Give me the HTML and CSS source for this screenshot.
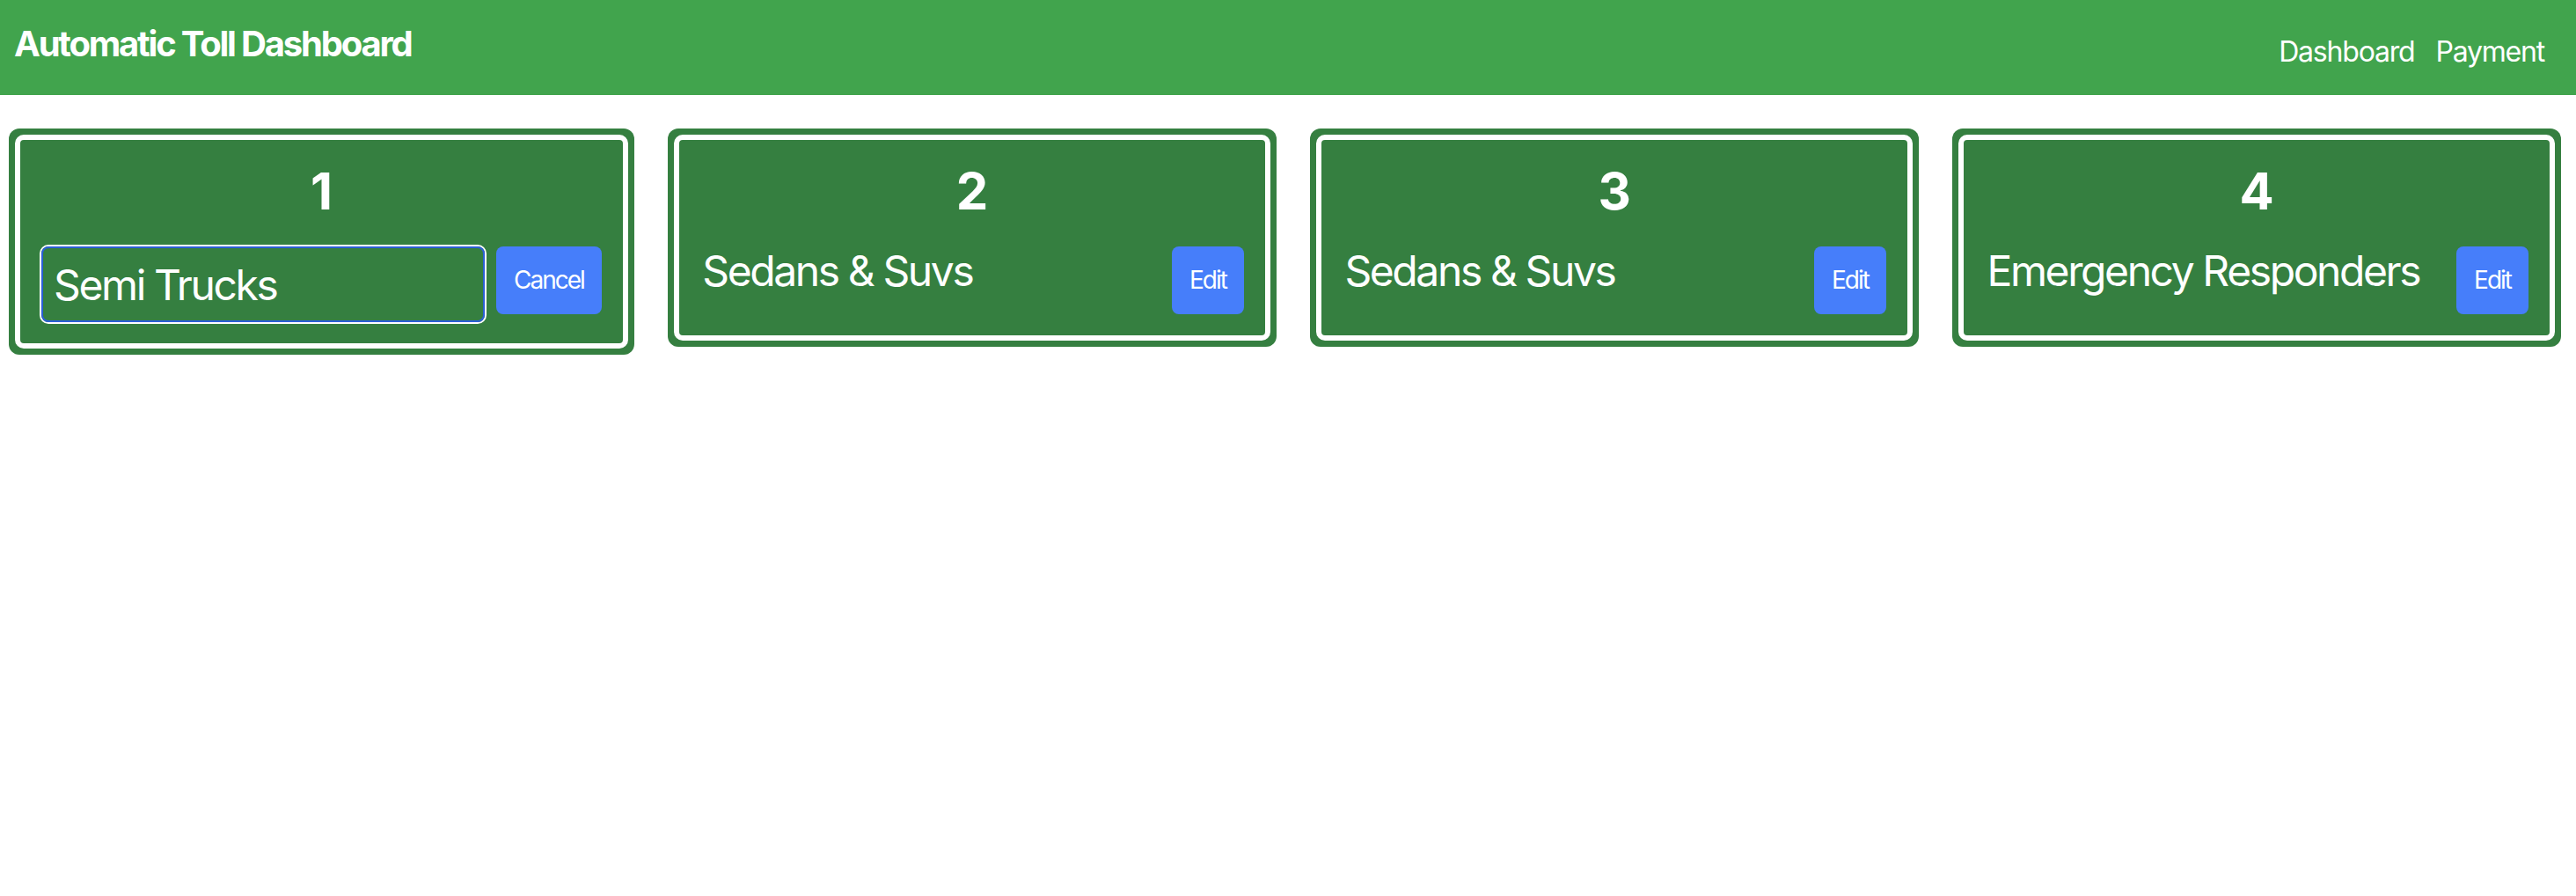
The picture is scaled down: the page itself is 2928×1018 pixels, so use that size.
FILE: index.html
```html
<!DOCTYPE html>
<html lang="en">
<head>
<meta charset="utf-8">
<title>Automatic Toll Dashboard</title>
<link rel="stylesheet" href="styles.css">
</head>
<body>
<header class="topbar">
  <h1 class="brand">Automatic Toll Dashboard</h1>
  <nav class="nav">
    <a class="nav-link nav-link-first" href="#">Dashboard</a>
    <a class="nav-link" href="#">Payment</a>
  </nav>
</header>
<main class="lanes">
  <section class="lane lane-editing">
    <div class="lane-inner">
      <div class="lane-num">1</div>
      <div class="lane-row">
        <input class="lane-input" type="text" value="Semi Trucks">
        <button class="btn" type="button">Cancel</button>
      </div>
    </div>
  </section>
  <section class="lane">
    <div class="lane-inner">
      <div class="lane-num">2</div>
      <div class="lane-row">
        <span class="lane-name">Sedans &amp; Suvs</span>
        <button class="btn" type="button">Edit</button>
      </div>
    </div>
  </section>
  <section class="lane">
    <div class="lane-inner">
      <div class="lane-num">3</div>
      <div class="lane-row">
        <span class="lane-name">Sedans &amp; Suvs</span>
        <button class="btn" type="button">Edit</button>
      </div>
    </div>
  </section>
  <section class="lane">
    <div class="lane-inner">
      <div class="lane-num">4</div>
      <div class="lane-row">
        <span class="lane-name">Emergency Responders</span>
        <button class="btn" type="button">Edit</button>
      </div>
    </div>
  </section>
</main>
</body>
</html>
```
FILE: styles.css
```css
* { box-sizing: border-box; }

html, body {
  margin: 0;
  padding: 0;
  background: #ffffff;
  font-family: Inter, "Liberation Sans", Arial, sans-serif;
}

.topbar {
  height: 108px;
  background: #41a44d;
  color: #ffffff;
  display: flex;
  justify-content: space-between;
  align-items: flex-start;
  padding: 22px 16px 0 16px;
}

.brand {
  margin: 0;
  font-size: 40px;
  line-height: 56px;
  font-weight: 700;
  letter-spacing: -2.2px;
}

.nav {
  display: flex;
  margin-top: 13px;
  margin-right: 20px;
}

.nav-link {
  color: #ffffff;
  text-decoration: none;
  font-size: 32px;
  line-height: 48px;
  letter-spacing: -1.2px;
}

.nav-link-first { margin-right: 24px; }

.lanes {
  display: flex;
  align-items: flex-start;
  gap: 38.5px;
  padding: 38px 17px 0 10px;
}

.lane {
  flex: 1 1 0;
  min-width: 0;
  background: #357f40;
  padding: 7px;
  border-radius: 12px;
}

.lane-editing { flex: none; }

.lane-inner {
  border: 6px solid #ffffff;
  border-radius: 10px;
  padding: 22px 24px 24px 24px;
}

.lane-num {
  text-align: center;
  color: #ffffff;
  font-size: 58px;
  line-height: 72px;
  font-weight: 700;
  margin-bottom: 27px;
}

.lane-row {
  display: flex;
  justify-content: space-between;
  align-items: flex-start;
  gap: 13px;
}

.lane-name {
  color: #ffffff;
  font-size: 48px;
  line-height: 55px;
  letter-spacing: -2.4px;
  white-space: nowrap;
  padding-left: 2px;
}

.lane-input {
  width: 504px;
  height: 86px;
  margin: 0;
  padding: 0 10px 0 12px;
  border: 2px solid #2b5fd6;
  border-radius: 8px;
  box-shadow: 0 0 0 2px #ffffff;
  background: transparent;
  color: #ffffff;
  font-family: Inter, "Liberation Sans", Arial, sans-serif;
  font-size: 48px;
  letter-spacing: -2.4px;
  outline: none;
}

.btn {
  flex: none;
  height: 77px;
  padding: 0 20px;
  border: none;
  border-radius: 8px;
  background: #467efa;
  color: #ffffff;
  font-family: Inter, "Liberation Sans", Arial, sans-serif;
  font-size: 28px;
  line-height: 77px;
  letter-spacing: -2px;
}
```
